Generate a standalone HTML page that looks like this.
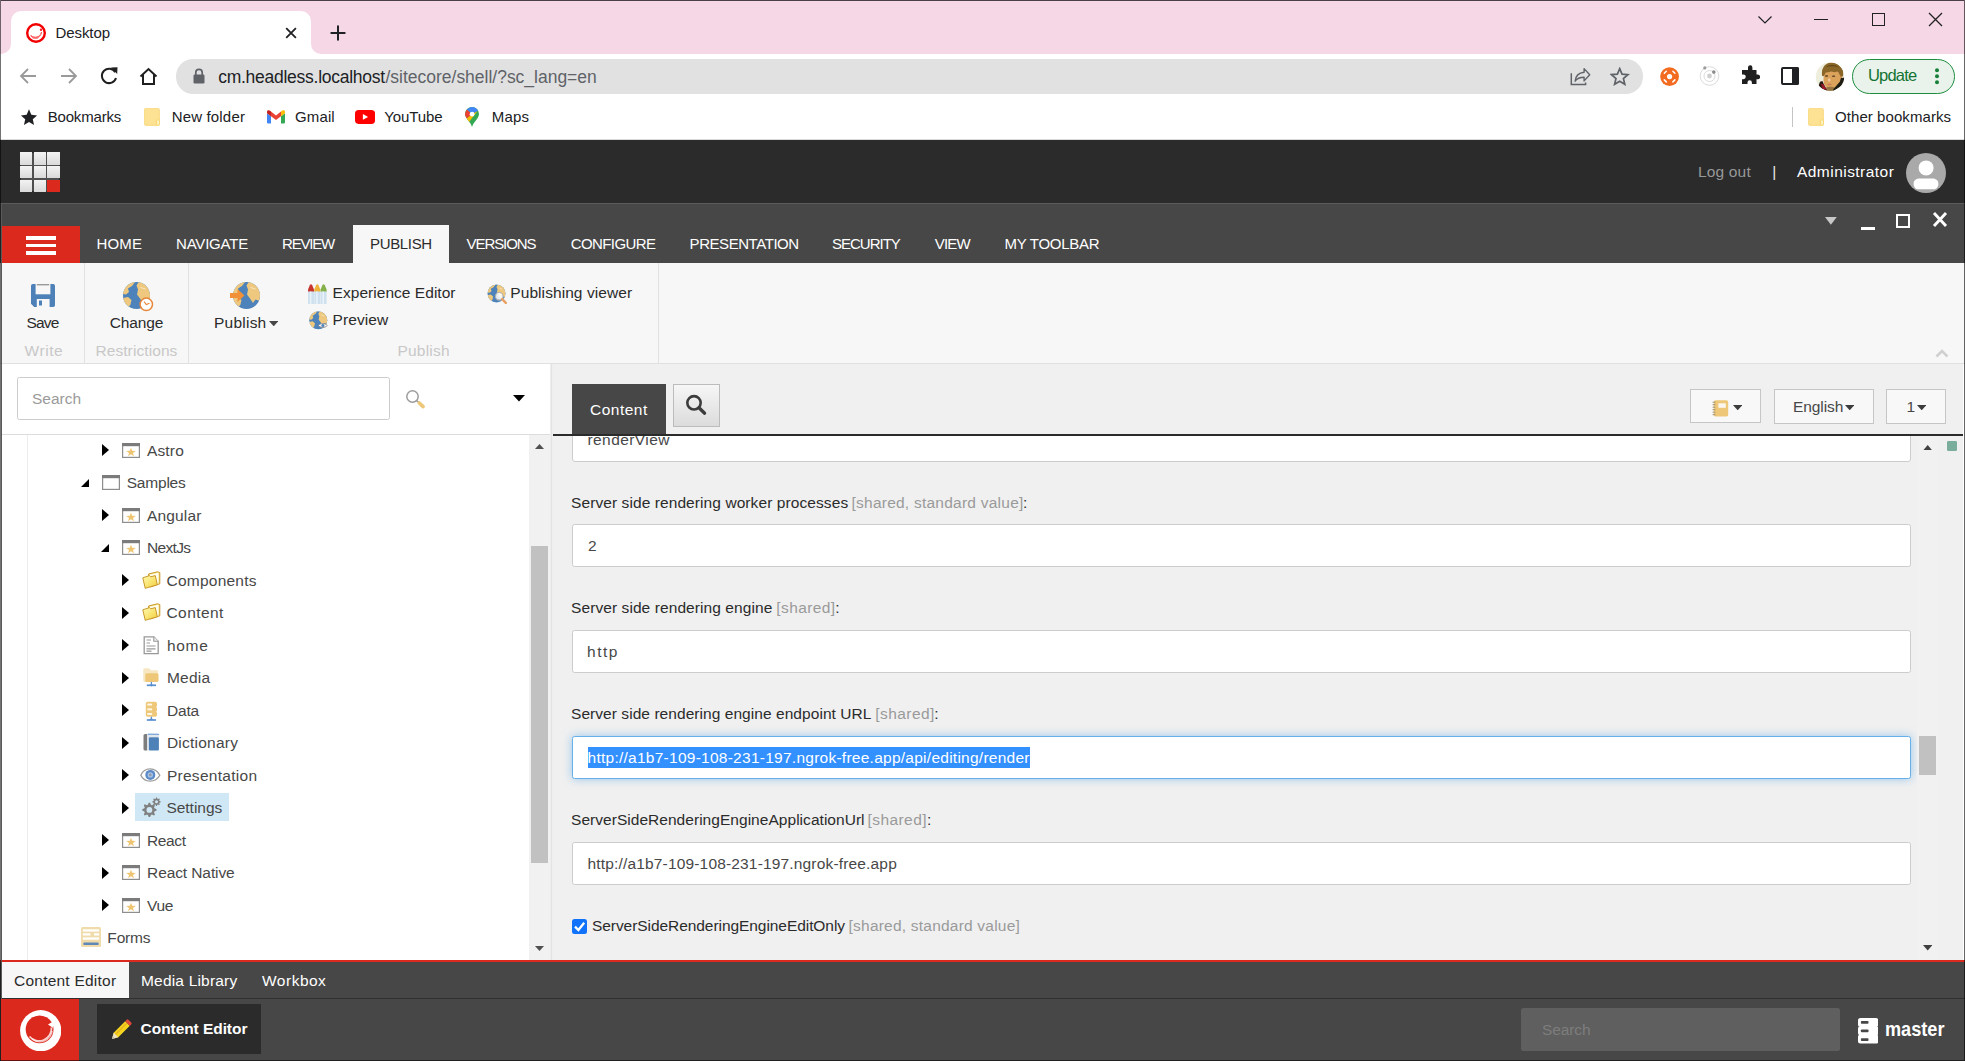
<!DOCTYPE html>
<html lang="en"><head><meta charset="utf-8"><title>Desktop</title>
<style>
html,body{margin:0;padding:0;}
body{width:1965px;height:1061px;overflow:hidden;position:relative;background:#fff;font-family:"Liberation Sans", Arial, sans-serif;}
body>div,body>span,body>svg,body>a,body>label,body>input,body>button{position:absolute;box-sizing:border-box;display:block;}
.t{white-space:pre;}
</style></head>
<body>

<!-- browser frame -->
<div style="left:0px;top:0px;width:1965px;height:54px;background:#f5d7e6;"></div>
<div style="left:1px;top:0px;width:1963px;height:1px;background:rgba(0,0,0,.7);"></div>
<div style="left:11px;top:11px;width:300px;height:43px;background:#fff;border-radius:10px 10px 0 0;"></div>
<svg style="left:1px;top:44px;" width="10" height="10" viewBox="0 0 10 10"><path d="M10 0 V10 H0 A10 10 0 0 0 10 0Z" fill="#fff"/></svg>
<svg style="left:311px;top:44px;" width="10" height="10" viewBox="0 0 10 10"><path d="M0 0 V10 H10 A10 10 0 0 1 0 0Z" fill="#fff"/></svg>
<svg style="left:25px;top:21.8px;" width="22" height="22" viewBox="0 0 22 22"><circle cx="11" cy="11" r="8.800" fill="#fff" stroke="#f20000" stroke-width="2.400"/><path d="M5.800 13.500c1.500 4 9 5 10.800-3.500c-1.500 5.500-7 6.500-10.800 3.500Z" fill="#f66" stroke="#f55" stroke-width="1"/><path d="M7.500 15.800c3.500 1.800 7.500 0 8.500-4.500" fill="none" stroke="#f99" stroke-width=".8"/><circle cx="16" cy="7.800" r="1.200" fill="#f22"/></svg>
<span class="t" style="left:55.5px;top:24px;font-size:15px;line-height:17px;color:#202124;letter-spacing:-0.083px;">Desktop</span>
<svg style="left:285px;top:26.6px;" width="12" height="12" viewBox="0 0 12 12"><path d="M1.200 1.200L10.900 10.900M10.900 1.200L1.200 10.900" stroke="#202124" stroke-width="1.800" fill="none"/></svg>
<svg style="left:330.4px;top:24.5px;" width="16" height="16" viewBox="0 0 16 16"><path d="M8 1.300V14.700M1.300 8H14.700" stroke="#202124" stroke-width="2" stroke-linecap="round" fill="none"/></svg>
<svg style="left:1757px;top:14px;" width="16" height="12" viewBox="0 0 16 12"><path d="M1.5 2.5L8 9L14.5 2.5" stroke="#222" stroke-width="1.2" fill="none"/></svg>
<div style="left:1814px;top:19px;width:14px;height:1px;background:#222;"></div>
<div style="left:1872px;top:13px;width:13px;height:13px;border:1.3px solid #222;"></div>
<svg style="left:1928px;top:12px;" width="15" height="15" viewBox="0 0 15 15"><path d="M1 1L14 14M14 1L1 14" stroke="#222" stroke-width="1.3" fill="none"/></svg>

<!-- browser toolbar -->
<div style="left:0px;top:54px;width:1965px;height:46px;background:#fff;"></div>
<svg style="left:18px;top:66px;" width="21" height="20" viewBox="0 0 21 20"><path d="M18 10H3.5M10 3L3 10L10 17" stroke="#9a9a9a" stroke-width="1.8" fill="none"/></svg>
<svg style="left:58px;top:66px;" width="21" height="20" viewBox="0 0 21 20"><path d="M3 10H17.5M11 3L18 10L11 17" stroke="#9a9a9a" stroke-width="1.8" fill="none"/></svg>
<svg style="left:98px;top:64.5px;" width="22" height="22" viewBox="0 0 22 22"><path d="M17.3 7.2A7.2 7.2 0 1 0 18 13" stroke="#1f1f1f" stroke-width="2" fill="none"/><path d="M13 2.5L19.5 2.2L19.2 9Z" fill="#1f1f1f"/></svg>
<svg style="left:138px;top:65.5px;" width="21" height="21" viewBox="0 0 21 21"><path d="M2.5 10.5L10.5 3L18.5 10.5M5 8.8V18H16V8.8" stroke="#1f1f1f" stroke-width="2" fill="none" stroke-linejoin="miter"/></svg>
<div style="left:176px;top:59px;width:1467px;height:34.5px;background:#e1e1e1;border-radius:17.2px;"></div>
<svg style="left:193px;top:68px;" width="12" height="16" viewBox="0 0 12 16"><rect x="0.5" y="6.5" width="11" height="9" rx="1.3" fill="#5f6368"/><path d="M2.8 7V4.6a3.2 3.2 0 0 1 6.4 0V7" stroke="#5f6368" stroke-width="1.7" fill="none"/></svg>
<span class="t" style="left:218.2px;top:67px;font-size:17.5px;line-height:20px;color:#202124;letter-spacing:-0.26px;">cm.headless.localhost</span>
<span class="t" style="left:385.5px;top:67px;font-size:17.5px;line-height:20px;color:#5f6368;letter-spacing:-0.012px;">/sitecore/shell/?sc_lang=en</span>
<svg style="left:1570px;top:67px;" width="21" height="19" viewBox="0 0 21 19"><path d="M1.300 6.200V17.400H15.600V15.600" stroke="#5f6368" stroke-width="1.500" fill="none"/><path d="M14.100 1.600L19.700 7.700L14.100 13.900V10.200C9.500 10.200 6.800 11.500 5.100 14.200C5.600 9 9 5.800 14.100 5.300Z" stroke="#5f6368" stroke-width="1.400" fill="none" stroke-linejoin="round"/></svg>
<svg style="left:1610px;top:67px;" width="20" height="19" viewBox="0 0 20 19"><path d="M9.700 1.700L12 7.100L17.900 7.600L13.400 11.500L14.800 17.300L9.700 14.200L4.600 17.300L6 11.500L1.500 7.600L7.400 7.100Z" stroke="#5f6368" stroke-width="1.700" fill="none" stroke-linejoin="miter"/></svg>
<svg style="left:1660px;top:66.8px;" width="19.2" height="19.2" viewBox="0 0 19.2 19.2"><circle cx="9.600" cy="9.600" r="9.400" fill="#f26b21"/><circle cx="9.600" cy="9.600" r="2.600" fill="#fff"/><path d="M4.300 6.300L6.300 4.300M12.900 4.300L14.900 6.300M14.900 12.900L12.900 14.900M6.300 14.900L4.300 12.900" stroke="#fff" stroke-width="1.500" stroke-linecap="round"/></svg>
<svg style="left:1699px;top:65.4px;" width="22" height="22" viewBox="0 0 22 22"><circle cx="10.500" cy="11" r="9.300" fill="none" stroke="#dcdcdc" stroke-width="1"/><circle cx="10.500" cy="11" r="5.500" fill="none" stroke="#dcdcdc" stroke-width="1"/><circle cx="10.500" cy="11" r="2.400" fill="#cfcfcf"/><circle cx="5.800" cy="2.900" r="1.600" fill="#9a9a9a"/><circle cx="14.800" cy="7.100" r="1.800" fill="#8a8a8a"/></svg>
<svg style="left:1739.3px;top:65.3px;" width="21" height="21" viewBox="0 0 21 21"><path d="M9 2.5a2.2 2.2 0 0 1 4.4 0V5h4.1v4.4h1.2a2.4 2.4 0 0 1 0 4.8h-1.2V19h-4.6v-1.6a2.2 2.2 0 0 0-4.4 0V19H3v-4.8h1.4a2.4 2.4 0 0 0 0-4.8H3V5h6Z" fill="#1f1f1f"/></svg>
<div style="left:1781px;top:67.2px;width:17.6px;height:17.8px;background:#fff;border:2.5px solid #202124;border-radius:2px;"></div>
<div style="left:1792.3px;top:67.2px;width:6.3px;height:17.8px;background:#202124;border-radius:0 2px 2px 0;"></div>
<svg style="left:1815px;top:62px;" width="30" height="30" viewBox="0 0 30 30"><defs><clipPath id="av"><circle cx="15" cy="14.800" r="14.200"/></clipPath></defs><g clip-path="url(#av)"><rect width="30" height="30" fill="#eeeedd"/><ellipse cx="17.600" cy="10" rx="10.300" ry="9" fill="#8a6628"/><ellipse cx="17.100" cy="17.700" rx="8.700" ry="10.500" fill="#dba25c"/><path d="M25.800 12.500L27.300 13.500L26.800 17L25.300 17.500Z" fill="#c98a48"/><path d="M7 13.800C6 4 12 0.300 17 0.500C24 0.500 29.500 5.500 28 14.500L25.800 14C26 11 25 9.500 23 9L20 10.200L16 9.500L12 10.500L9.300 10C8.600 11 8.600 12.500 8.800 14.200Z" fill="#8a6628"/><path d="M11 5C13 2.500 20 2 24 5.500C21 4 14 4 11 5Z" fill="#5e4316"/><ellipse cx="11.500" cy="14" rx="1.700" ry=".650" fill="#4a3318"/><ellipse cx="18.600" cy="14.200" rx="1.700" ry=".650" fill="#4a3318"/><ellipse cx="14.200" cy="18" rx="1.300" ry="1.800" fill="#f0c9a0"/><ellipse cx="14.600" cy="22.500" rx="2.200" ry=".700" fill="#c9785a"/><ellipse cx="15.300" cy="27" rx="5" ry="2.300" fill="#8a6a38" opacity=".85"/><path d="M25.800 16.200L29.500 15.500V22L17.700 29.500L18.500 26.900L24.800 19.700Z" fill="#1f1c12"/><path d="M5 19.700L7.400 18.900L8.600 21.700L12.200 28.500L6.600 28L3.500 24Z" fill="#2a1a14"/><path d="M5.800 21.700L8.600 22.500L11.800 27.800L7.800 27Z" fill="#a01828"/></g></svg>
<div style="left:1852px;top:58.8px;width:103px;height:34.8px;background:#e9f3ec;border:1.3px solid #1e8e3e;border-radius:17.4px;"></div>
<span class="t" style="left:1868px;top:66px;font-size:16.5px;line-height:18px;color:#137333;letter-spacing:-0.8px;">Update</span>
<svg style="left:1934px;top:66px;" width="6" height="21" viewBox="0 0 6 21"><circle cx="3" cy="4.200" r="2" fill="#188038"/><circle cx="3" cy="10.200" r="2" fill="#188038"/><circle cx="3" cy="16.200" r="2" fill="#188038"/></svg>

<!-- bookmarks bar -->
<div style="left:0px;top:100px;width:1965px;height:40px;background:#fff;"></div>
<div style="left:0px;top:139px;width:1965px;height:1px;background:#dadada;"></div>
<svg style="left:20px;top:108px;" width="18" height="18" viewBox="0 0 20 20"><path d="M10 1.5L12.6 7.6L19 8.2L14.2 12.5L15.6 18.8L10 15.5L4.4 18.8L5.8 12.5L1 8.2L7.4 7.6Z" fill="#202124"/></svg>
<span class="t" style="left:47.7px;top:108px;font-size:15px;line-height:17px;color:#202124;letter-spacing:-0.175px;">Bookmarks</span>
<svg style="left:144px;top:108px;" width="16" height="18" viewBox="0 0 16 18"><rect x="0.400" y="0.400" width="15" height="17" rx="1.600" fill="#fde293" stroke="#f8d775" stroke-width=".8"/><rect x="12.600" y="11.800" width="3" height="5.400" rx="1.100" fill="#fff3c4" stroke="#f6cf5e" stroke-width=".8"/></svg>
<span class="t" style="left:171.7px;top:108px;font-size:15px;line-height:17px;color:#202124;letter-spacing:0.167px;">New folder</span>
<svg style="left:266.9px;top:110.2px;" width="18" height="13.4" viewBox="0 0 18 13.4"><path d="M0 3.200L4 6.200V13.400H1.200A1.200 1.200 0 0 1 0 12.200Z" fill="#4285f4"/><path d="M18 3.200L14 6.200V13.400H16.800A1.200 1.200 0 0 0 18 12.200Z" fill="#34a853"/><path d="M4 6.200V1.600L9 5.400L14 1.600V6.200L9 10Z" fill="#ea4335"/><path d="M0 3.200V1.800A1.700 1.700 0 0 1 2.700 0.500L4 1.600V6.200Z" fill="#c5221f"/><path d="M18 3.200V1.800A1.700 1.700 0 0 0 15.300 0.500L14 1.600V6.200Z" fill="#fbbc04"/></svg>
<span class="t" style="left:295px;top:108px;font-size:15px;line-height:17px;color:#202124;letter-spacing:0.125px;">Gmail</span>
<svg style="left:355px;top:110px;" width="20.1" height="13.9" viewBox="0 0 20.1 13.9"><rect x="0" y="0" width="20.100" height="13.900" rx="3.600" fill="#f00"/><path d="M7.900 4.100L13.100 6.950L7.900 9.800Z" fill="#fff"/></svg>
<span class="t" style="left:384.3px;top:108px;font-size:15px;line-height:17px;color:#202124;letter-spacing:-0.1px;">YouTube</span>
<svg style="left:465px;top:106.9px;" width="14" height="19.9" viewBox="0 0 14 19.9"><defs><clipPath id="mp"><path d="M7 0A7 7 0 0 1 14 7C14 11.500 9 14 7 19.900C5 14 0 11.500 0 7A7 7 0 0 1 7 0Z"/></clipPath></defs><g clip-path="url(#mp)"><rect width="14" height="20" fill="#34a853"/><path d="M7 7L1.500 11.500L4 15L12.500 4Z" fill="#fbbc04"/><path d="M7 7L1.800 2.300L-1 7L1.500 11.500Z" fill="#ea4335"/><path d="M7 7L1.800 2.300L7 -1L14 1.500L12.500 4Z" fill="#4285f4"/><circle cx="7.100" cy="7.200" r="2.400" fill="#fff"/></g></svg>
<span class="t" style="left:491.8px;top:108px;font-size:15px;line-height:17px;color:#202124;letter-spacing:0.2px;">Maps</span>
<div style="left:1792px;top:107px;width:1px;height:20px;background:#c4c4c4;"></div>
<svg style="left:1808px;top:108px;" width="16" height="18" viewBox="0 0 16 18"><rect x="0.400" y="0.400" width="15" height="17" rx="1.600" fill="#fde293" stroke="#f8d775" stroke-width=".8"/><rect x="12.600" y="11.800" width="3" height="5.400" rx="1.100" fill="#fff3c4" stroke="#f6cf5e" stroke-width=".8"/></svg>
<span class="t" style="left:1835px;top:108px;font-size:15px;line-height:17px;color:#202124;letter-spacing:0.071px;">Other bookmarks</span>

<!-- sitecore header -->
<div style="left:0px;top:140px;width:1965px;height:63px;background:#2b2b2b;"></div>
<div style="left:20.5px;top:152.7px;width:38.8px;height:38.8px;background:#4e4e4e;"></div>
<div style="left:20.0px;top:152.2px;width:12.4px;height:12.4px;background:linear-gradient(#f3f3f3,#d9d9d9);"></div>
<div style="left:33.7px;top:152.2px;width:12.4px;height:12.4px;background:linear-gradient(#f3f3f3,#d9d9d9);"></div>
<div style="left:47.4px;top:152.2px;width:12.4px;height:12.4px;background:linear-gradient(#f3f3f3,#d9d9d9);"></div>
<div style="left:20.0px;top:165.89999999999998px;width:12.4px;height:12.4px;background:linear-gradient(#f3f3f3,#d9d9d9);"></div>
<div style="left:33.7px;top:165.89999999999998px;width:12.4px;height:12.4px;background:linear-gradient(#f3f3f3,#d9d9d9);"></div>
<div style="left:47.4px;top:165.89999999999998px;width:12.4px;height:12.4px;background:linear-gradient(#f3f3f3,#d9d9d9);"></div>
<div style="left:20.0px;top:179.6px;width:12.4px;height:12.4px;background:linear-gradient(#f3f3f3,#d9d9d9);"></div>
<div style="left:33.7px;top:179.6px;width:12.4px;height:12.4px;background:linear-gradient(#f3f3f3,#d9d9d9);"></div>
<div style="left:47.4px;top:179.6px;width:12.4px;height:12.4px;background:#dc291e;"></div>
<span class="t" style="left:1698px;top:163px;font-size:15.5px;line-height:17px;color:#989898;letter-spacing:0.167px;">Log out</span>
<span class="t" style="left:1772.3px;top:163px;font-size:15.5px;line-height:17px;color:#e8e8e8;">|</span>
<span class="t" style="left:1797px;top:163px;font-size:15.5px;line-height:17px;color:#ffffff;letter-spacing:0.458px;">Administrator</span>
<svg style="left:1906px;top:152.6px;" width="40" height="40" viewBox="0 0 40 40"><defs><clipPath id="uc"><circle cx="20" cy="20" r="20"/></clipPath></defs><circle cx="20" cy="20" r="20" fill="#a9a9a9"/><g clip-path="url(#uc)"><circle cx="20.100" cy="14.900" r="7.500" fill="#fff"/><path d="M7.600 31c0-4 3-5.400 6-5.400h12.800c3 0 6 1.400 6 5.400c0 3-2 5.300-5 5.300h-14.800c-3 0-5-2.300-5-5.300Z" fill="#fff"/></g></svg>

<!-- ribbon bar -->
<div style="left:0px;top:203px;width:1965px;height:59.5px;background:#474747;"></div>
<div style="left:0px;top:203px;width:1965px;height:1px;background:#5c5c5c;"></div>
<svg style="left:1825px;top:216.8px;" width="11.8" height="7.8" viewBox="0 0 11.8 7.8"><path d="M0 0H11.800L5.900 7.800Z" fill="#c8c8c8"/></svg>
<div style="left:1860.7px;top:227.2px;width:14px;height:2.8px;background:#fff;"></div>
<div style="left:1896.2px;top:214px;width:14.3px;height:13.7px;border:2.5px solid #fff;"></div>
<svg style="left:1931.5px;top:211px;" width="16" height="17" viewBox="0 0 16 17"><path d="M2 2L14 15M14 2L2 15" stroke="#fff" stroke-width="2.900" fill="none"/></svg>
<div style="left:2px;top:226px;width:78px;height:36.5px;background:#dc291e;"></div>
<div style="left:26px;top:236px;width:30.3px;height:3.75px;background:#fff;"></div>
<div style="left:26px;top:243.5px;width:30.3px;height:3.75px;background:#fff;"></div>
<div style="left:26px;top:251px;width:30.3px;height:3.75px;background:#fff;"></div>
<div style="left:352.7px;top:225px;width:96px;height:38px;background:#f7f7f7;"></div>
<span class="t" style="left:96.4px;top:235px;font-size:15px;line-height:17px;color:#fff;letter-spacing:0.2px;">HOME</span>
<span class="t" style="left:176px;top:235px;font-size:15px;line-height:17px;color:#fff;letter-spacing:-0.2px;">NAVIGATE</span>
<span class="t" style="left:282px;top:235px;font-size:15px;line-height:17px;color:#fff;letter-spacing:-1.2px;">REVIEW</span>
<span class="t" style="left:370px;top:235px;font-size:15px;line-height:17px;color:#2b2b2b;letter-spacing:-0.333px;">PUBLISH</span>
<span class="t" style="left:466.6px;top:235px;font-size:15px;line-height:17px;color:#fff;letter-spacing:-1.086px;">VERSIONS</span>
<span class="t" style="left:570.7px;top:235px;font-size:15px;line-height:17px;color:#fff;letter-spacing:-0.588px;">CONFIGURE</span>
<span class="t" style="left:689.6px;top:235px;font-size:15px;line-height:17px;color:#fff;letter-spacing:-0.445px;">PRESENTATION</span>
<span class="t" style="left:832px;top:235px;font-size:15px;line-height:17px;color:#fff;letter-spacing:-1.0px;">SECURITY</span>
<span class="t" style="left:934.8px;top:235px;font-size:15px;line-height:17px;color:#fff;letter-spacing:-0.8px;">VIEW</span>
<span class="t" style="left:1004.6px;top:235px;font-size:15px;line-height:17px;color:#fff;letter-spacing:-0.289px;">MY TOOLBAR</span>

<!-- ribbon content -->
<div style="left:0px;top:262.5px;width:1965px;height:100.5px;background:#f7f7f7;"></div>
<div style="left:0px;top:362.5px;width:1965px;height:1.5px;background:#e0e0e0;"></div>
<div style="left:84px;top:262.5px;width:1px;height:100px;background:#e1e1e1;"></div>
<div style="left:188px;top:262.5px;width:1px;height:100px;background:#e1e1e1;"></div>
<div style="left:658px;top:262.5px;width:1px;height:100px;background:#e1e1e1;"></div>
<span class="t" style="left:26.5px;top:314px;font-size:15.5px;line-height:17px;color:#2b2b2b;letter-spacing:-0.833px;">Save</span>
<span class="t" style="left:24.5px;top:342px;font-size:15.5px;line-height:17px;color:#c8c8c8;letter-spacing:0.575px;">Write</span>
<span class="t" style="left:109.8px;top:314px;font-size:15.5px;line-height:17px;color:#2b2b2b;letter-spacing:-0.16px;">Change</span>
<span class="t" style="left:95.4px;top:342px;font-size:15.5px;line-height:17px;color:#c8c8c8;letter-spacing:0.091px;">Restrictions</span>
<span class="t" style="left:214px;top:314px;font-size:15.5px;line-height:17px;color:#2b2b2b;letter-spacing:0.233px;">Publish</span>
<svg style="left:268.7px;top:321.2px;" width="9.4" height="5.3" viewBox="0 0 9.4 5.3"><path d="M0 0H9.400L4.700 5.300Z" fill="#474747"/></svg>
<span class="t" style="left:332.6px;top:284px;font-size:15.5px;line-height:17px;color:#2b2b2b;letter-spacing:0.037px;">Experience Editor</span>
<span class="t" style="left:332.6px;top:311px;font-size:15.5px;line-height:17px;color:#2b2b2b;letter-spacing:0.067px;">Preview</span>
<span class="t" style="left:510.3px;top:284px;font-size:15.5px;line-height:17px;color:#2b2b2b;letter-spacing:0.075px;">Publishing viewer</span>
<span class="t" style="left:397.4px;top:342px;font-size:15.5px;line-height:17px;color:#c8c8c8;letter-spacing:0.233px;">Publish</span>
<svg style="left:1935px;top:348px;" width="14" height="10" viewBox="0 0 14 10"><path d="M1.500 8.500L7 3L12.500 8.500" stroke="#d0d0d0" stroke-width="2.600" fill="none"/></svg>

<!-- ribbon icons -->
<svg style="left:31px;top:283.5px;" width="24" height="23" viewBox="0 0 24 23"><path d="M0 1.800A1.800 1.800 0 0 1 1.800 0H22.200A1.800 1.800 0 0 1 24 1.800V21.200A1.800 1.800 0 0 1 22.200 23H3.200L0 19.800Z" fill="#4d81b8"/><rect x="4.600" y="0" width="14.800" height="10.300" fill="#f7f7f7"/><rect x="5.800" y="0" width="12.400" height="1.400" fill="#9a9a9a"/><rect x="5.800" y="15" width="12.800" height="8" fill="#f7f7f7"/><rect x="8" y="16.500" width="3" height="5" fill="#4d81b8"/></svg>
<svg style="left:122px;top:281px;" width="32" height="31" viewBox="0 0 32 31"><defs><clipPath id="g1"><circle cx="14.5" cy="14.5" r="13.5"/></clipPath></defs><circle cx="14.5" cy="14.5" r="13.5" fill="#4d82ba"/><g clip-path="url(#g1)" fill="#eec87e"><path d="M0.50 10.50 C2.50 3.50 7.50 0.50 13.50 0.50 L10.00 5.00 L6.00 7.50 L7.00 11.00 L4.00 13.50 L0.50 13.00Z"/><path d="M17.00 0.50 C23.50 0.50 28.50 6.50 28.50 14.50 L28.00 20.00 L23.50 18.50 L21.00 22.00 L18.00 17.50 L15.00 13.50 L16.00 8.50 L14.50 4.50Z"/><path d="M0.50 17.00 L6.00 16.00 L9.50 19.00 L8.50 23.50 L5.50 27.50 L0.50 23.50Z"/></g><path d="M18.50 6.50 L23.50 8.00" stroke="#fff" stroke-opacity=".6" stroke-width="0.90"/><circle cx="24.300" cy="23.300" r="6.200" fill="#fff" stroke="#e8873a" stroke-width="1.500"/><path d="M22 20.500L24.300 23.500L27.500 22.300" stroke="#e8873a" stroke-width="1.200" fill="none"/></svg>
<svg style="left:229px;top:281px;" width="32" height="31" viewBox="0 0 32 31"><defs><clipPath id="g2"><circle cx="17.5" cy="14.5" r="13.5"/></clipPath></defs><circle cx="17.5" cy="14.5" r="13.5" fill="#4d82ba"/><g clip-path="url(#g2)" fill="#eec87e"><path d="M3.50 10.50 C5.50 3.50 10.50 0.50 16.50 0.50 L13.00 5.00 L9.00 7.50 L10.00 11.00 L7.00 13.50 L3.50 13.00Z"/><path d="M20.00 0.50 C26.50 0.50 31.50 6.50 31.50 14.50 L31.00 20.00 L26.50 18.50 L24.00 22.00 L21.00 17.50 L18.00 13.50 L19.00 8.50 L17.50 4.50Z"/><path d="M3.50 17.00 L9.00 16.00 L12.50 19.00 L11.50 23.50 L8.50 27.50 L3.50 23.50Z"/></g><path d="M21.50 6.50 L26.50 8.00" stroke="#fff" stroke-opacity=".6" stroke-width="0.90"/><path d="M1 12H8.500V8L15.500 14.500L8.500 21V17H1Z" fill="#f0913a"/></svg>
<svg style="left:308px;top:283.7px;" width="19" height="20" viewBox="0 0 19 20"><path d="M0 8V5.500L1.800 1.200Q3 -0.600 4.200 1.200L6 5.500V8Z" fill="#c7372f"/><path d="M6.300 8V5.500L8.100 1.200Q9.300 -0.600 10.500 1.200L12.300 5.500V8Z" fill="#eeb43a"/><path d="M12.600 8V5.500L14.400 1.200Q15.600 -0.600 16.800 1.200L18.600 5.500V8Z" fill="#86b04a"/><rect x="0" y="7.500" width="6" height="12.500" fill="#cfe1ee"/><rect x="6.300" y="7.500" width="6" height="12.500" fill="#cfe1ee"/><rect x="12.600" y="7.500" width="6" height="12.500" fill="#cfe1ee"/><rect x="1.800" y="7.500" width="1.600" height="12.500" fill="#e8f2f9"/><rect x="8.100" y="7.500" width="1.600" height="12.500" fill="#e8f2f9"/><rect x="14.400" y="7.500" width="1.600" height="12.500" fill="#e8f2f9"/></svg>
<svg style="left:308.5px;top:310.5px;" width="20" height="19" viewBox="0 0 20 19"><defs><clipPath id="g3"><circle cx="9.3" cy="9.3" r="9"/></clipPath></defs><circle cx="9.3" cy="9.3" r="9" fill="#4d82ba"/><g clip-path="url(#g3)" fill="#eec87e"><path d="M-0.03 6.63 C1.30 1.97 4.63 -0.03 8.63 -0.03 L6.30 2.97 L3.63 4.63 L4.30 6.97 L2.30 8.63 L-0.03 8.30Z"/><path d="M10.97 -0.03 C15.30 -0.03 18.63 3.97 18.63 9.30 L18.30 12.97 L15.30 11.97 L13.63 14.30 L11.63 11.30 L9.63 8.63 L10.30 5.30 L9.30 2.63Z"/><path d="M-0.03 10.97 L3.63 10.30 L5.97 12.30 L5.30 15.30 L3.30 17.97 L-0.03 15.30Z"/></g><path d="M11.97 3.97 L15.30 4.97" stroke="#fff" stroke-opacity=".6" stroke-width="0.60"/><path d="M9.500 14.500c2-2.600 6.500-2.600 8.800 0c-2.300 2.600-6.800 2.600-8.800 0Z" fill="#f4f4f4" stroke="#8a8a8a" stroke-width=".9"/><circle cx="13.900" cy="14.500" r="1.500" fill="#4d81b8"/></svg>
<svg style="left:486.5px;top:284px;" width="21" height="20" viewBox="0 0 21 20"><defs><clipPath id="g4"><circle cx="9.5" cy="9.5" r="9"/></clipPath></defs><circle cx="9.5" cy="9.5" r="9" fill="#4d82ba"/><g clip-path="url(#g4)" fill="#eec87e"><path d="M0.17 6.83 C1.50 2.17 4.83 0.17 8.83 0.17 L6.50 3.17 L3.83 4.83 L4.50 7.17 L2.50 8.83 L0.17 8.50Z"/><path d="M11.17 0.17 C15.50 0.17 18.83 4.17 18.83 9.50 L18.50 13.17 L15.50 12.17 L13.83 14.50 L11.83 11.50 L9.83 8.83 L10.50 5.50 L9.50 2.83Z"/><path d="M0.17 11.17 L3.83 10.50 L6.17 12.50 L5.50 15.50 L3.50 18.17 L0.17 15.50Z"/></g><path d="M12.17 4.17 L15.50 5.17" stroke="#fff" stroke-opacity=".6" stroke-width="0.60"/><circle cx="12.300" cy="12.300" r="3.800" fill="#fff" fill-opacity=".85" stroke="#b0b0b0" stroke-width="1.200"/><path d="M15.200 15.200L18.800 18.800" stroke="#e9a060" stroke-width="2.400" stroke-linecap="round"/></svg>

<!-- content tree panel -->
<div style="left:0px;top:364px;width:550px;height:596px;background:#fff;"></div>
<div style="left:17px;top:377px;width:373px;height:43px;background:#fff;border:1px solid #ccc;border-radius:2.500px;"></div>
<span class="t" style="left:32px;top:390px;font-size:15.5px;line-height:17px;color:#9a9a9a;">Search</span>
<svg style="left:405px;top:389px;" width="22" height="22" viewBox="0 0 22 22"><circle cx="7.500" cy="7.500" r="5.700" fill="#fff" stroke="#9c9c9c" stroke-width="1.500"/><path d="M11.600 11.600L13.600 13.500" stroke="#9c9c9c" stroke-width="1.600"/><path d="M14.300 14L18.100 17.600" stroke="#eec878" stroke-width="3.600" stroke-linecap="round"/></svg>
<svg style="left:513.4px;top:395.2px;" width="12" height="6.6" viewBox="0 0 12 6.6"><path d="M0 0H12L6 6.600Z" fill="#000"/></svg>
<div style="left:1px;top:434px;width:549px;height:1px;background:#dcdcdc;"></div>
<div style="left:27px;top:435px;width:1px;height:525px;background:#ececec;"></div>
<div style="left:529.3px;top:435px;width:20.7px;height:525px;background:#f1f1f1;"></div>
<div style="left:531.3px;top:546px;width:16.5px;height:317px;background:#c1c1c1;"></div>
<svg style="left:535px;top:444.3px;" width="9" height="5" viewBox="0 0 9 5"><path d="M0 5H9L4.500 0Z" fill="#505050"/></svg>
<svg style="left:535px;top:946px;" width="9" height="5" viewBox="0 0 9 5"><path d="M0 0H9L4.500 5Z" fill="#505050"/></svg>
<div style="left:550px;top:364px;width:3px;height:596px;background:#eeeeee;"></div>
<div style="left:550.8px;top:364px;width:1.2px;height:596px;background:#e3e3e3;"></div>
<svg style="left:102.4px;top:444.3px;" width="7" height="12" viewBox="0 0 7 12"><path d="M0 0L7 6L0 12Z" fill="#000"/></svg>
<svg style="left:122.1px;top:442.6px;" width="18" height="15" viewBox="0 0 18 15"><rect x="0.6" y="0.6" width="16.8" height="13.8" fill="#fff" stroke="#8e8e8e" stroke-width="1.2"/><rect x="0" y="0" width="18" height="3.2" fill="#7b7b7b"/><path d="M9.00 4.71 L10.23 7.84 L13.85 7.95 L11.00 10.00 L12.00 13.20 L9.00 11.33 L6.00 13.20 L7.00 10.00 L4.15 7.95 L7.77 7.84Z" fill="#eec673"/></svg>
<span class="t" style="left:146.95px;top:442px;font-size:15.5px;line-height:17px;color:#474747;letter-spacing:0.163px;">Astro</span>
<svg style="left:81.0px;top:479.0px;" width="8" height="8" viewBox="0 0 8 8"><path d="M8 0V8H0Z" fill="#000"/></svg>
<svg style="left:102.1px;top:475.1px;" width="18" height="15" viewBox="0 0 18 15"><rect x="0.6" y="0.6" width="16.8" height="13.8" fill="#fff" stroke="#8e8e8e" stroke-width="1.2"/><rect x="0" y="0" width="18" height="3.2" fill="#7b7b7b"/></svg>
<span class="t" style="left:126.7px;top:474px;font-size:15.5px;line-height:17px;color:#474747;letter-spacing:-0.2px;">Samples</span>
<svg style="left:102.4px;top:509.3px;" width="7" height="12" viewBox="0 0 7 12"><path d="M0 0L7 6L0 12Z" fill="#000"/></svg>
<svg style="left:122.1px;top:507.6px;" width="18" height="15" viewBox="0 0 18 15"><rect x="0.6" y="0.6" width="16.8" height="13.8" fill="#fff" stroke="#8e8e8e" stroke-width="1.2"/><rect x="0" y="0" width="18" height="3.2" fill="#7b7b7b"/><path d="M9.00 4.71 L10.23 7.84 L13.85 7.95 L11.00 10.00 L12.00 13.20 L9.00 11.33 L6.00 13.20 L7.00 10.00 L4.15 7.95 L7.77 7.84Z" fill="#eec673"/></svg>
<span class="t" style="left:146.95px;top:507px;font-size:15.5px;line-height:17px;color:#474747;letter-spacing:0.175px;">Angular</span>
<svg style="left:101.0px;top:544.0px;" width="8" height="8" viewBox="0 0 8 8"><path d="M8 0V8H0Z" fill="#000"/></svg>
<svg style="left:122.1px;top:540.1px;" width="18" height="15" viewBox="0 0 18 15"><rect x="0.6" y="0.6" width="16.8" height="13.8" fill="#fff" stroke="#8e8e8e" stroke-width="1.2"/><rect x="0" y="0" width="18" height="3.2" fill="#7b7b7b"/><path d="M9.00 4.71 L10.23 7.84 L13.85 7.95 L11.00 10.00 L12.00 13.20 L9.00 11.33 L6.00 13.20 L7.00 10.00 L4.15 7.95 L7.77 7.84Z" fill="#eec673"/></svg>
<span class="t" style="left:147.05px;top:539px;font-size:15.5px;line-height:17px;color:#474747;letter-spacing:-0.67px;">NextJs</span>
<svg style="left:122.4px;top:574.3px;" width="7" height="12" viewBox="0 0 7 12"><path d="M0 0L7 6L0 12Z" fill="#000"/></svg>
<svg style="left:142.1px;top:570.5px;" width="19" height="19" viewBox="0 0 19 19"><defs><linearGradient id="fg" x1="0" y1="0" x2="1" y2="1"><stop offset="0" stop-color="#fffbb0"/><stop offset="1" stop-color="#f2cf3a"/></linearGradient></defs><path d="M6.500 3L15.500 0.800L17.800 1.500V12.800L8.500 16Z" fill="#f6e27a" stroke="#c9982c" stroke-width="1"/><path d="M7.500 3.800L16.500 1.800V12.300L8.500 15Z" fill="#fffef0"/><path d="M0.800 6.800L3.200 17.300L15.300 13.800L13.300 4.600L8.800 5.800L7.500 4.600Z" fill="url(#fg)" stroke="#c9982c" stroke-width="1" stroke-linejoin="round"/></svg>
<span class="t" style="left:166.5px;top:572px;font-size:15.5px;line-height:17px;color:#474747;letter-spacing:0.233px;">Components</span>
<svg style="left:122.4px;top:606.8px;" width="7" height="12" viewBox="0 0 7 12"><path d="M0 0L7 6L0 12Z" fill="#000"/></svg>
<svg style="left:142.1px;top:603.0px;" width="19" height="19" viewBox="0 0 19 19"><defs><linearGradient id="fg" x1="0" y1="0" x2="1" y2="1"><stop offset="0" stop-color="#fffbb0"/><stop offset="1" stop-color="#f2cf3a"/></linearGradient></defs><path d="M6.500 3L15.500 0.800L17.800 1.500V12.800L8.500 16Z" fill="#f6e27a" stroke="#c9982c" stroke-width="1"/><path d="M7.500 3.800L16.500 1.800V12.300L8.500 15Z" fill="#fffef0"/><path d="M0.800 6.800L3.200 17.300L15.300 13.800L13.300 4.600L8.800 5.800L7.500 4.600Z" fill="url(#fg)" stroke="#c9982c" stroke-width="1" stroke-linejoin="round"/></svg>
<span class="t" style="left:166.5px;top:604px;font-size:15.5px;line-height:17px;color:#474747;letter-spacing:0.417px;">Content</span>
<svg style="left:122.4px;top:639.3px;" width="7" height="12" viewBox="0 0 7 12"><path d="M0 0L7 6L0 12Z" fill="#000"/></svg>
<svg style="left:143.1px;top:636.0px;" width="17" height="19" viewBox="0 0 17 19"><path d="M1.200 0.800H10.800L15.200 5.200V17.600H1.200Z" fill="#fff" stroke="#999" stroke-width="1.300"/><path d="M10.800 0.800V5.200H15.200" fill="#eee" stroke="#999" stroke-width="1.100"/><path d="M3.500 4H8M3.500 10H12.500M3.500 12.800H12.500M3.500 15.200H8.500M3.500 7H7" stroke="#999" stroke-width="1.200"/></svg>
<span class="t" style="left:166.9px;top:637px;font-size:15.5px;line-height:17px;color:#474747;letter-spacing:0.7px;">home</span>
<svg style="left:122.4px;top:671.8px;" width="7" height="12" viewBox="0 0 7 12"><path d="M0 0L7 6L0 12Z" fill="#000"/></svg>
<svg style="left:143.1px;top:668.0px;" width="17" height="19" viewBox="0 0 17 19"><path d="M0.300 1.500A1.200 1.200 0 0 1 1.500 0.300H6L8 2.300H13.800A1.200 1.200 0 0 1 15 3.500V12.700A1.200 1.200 0 0 1 13.800 13.900H1.500A1.200 1.200 0 0 1 0.300 12.700Z" fill="#f6e6c2"/><rect x="2.300" y="5.200" width="13.200" height="8.700" rx="1.500" fill="#eec878"/><path d="M8.400 13.900V16.500" stroke="#5a8fcf" stroke-width="1.300"/><path d="M3.800 17.300H13" stroke="#5a8fcf" stroke-width="1.700"/><path d="M8.400 15.500L10.200 17.300L8.400 18.600L6.600 17.300Z" fill="#5a8fcf"/></svg>
<span class="t" style="left:166.9px;top:669px;font-size:15.5px;line-height:17px;color:#474747;letter-spacing:0.275px;">Media</span>
<svg style="left:122.4px;top:704.3px;" width="7" height="12" viewBox="0 0 7 12"><path d="M0 0L7 6L0 12Z" fill="#000"/></svg>
<svg style="left:145.1px;top:700.5px;" width="14" height="20" viewBox="0 0 14 20"><rect x="0.800" y="0.700" width="11.200" height="15" rx="1.800" fill="#eec878"/><rect x="2.300" y="2.600" width="4.800" height="1.900" fill="#fff8e8"/><rect x="2.300" y="7.400" width="4.800" height="1.900" fill="#fff8e8"/><rect x="2.300" y="12" width="4.800" height="1.900" fill="#fff8e8"/><path d="M12 5.300L10.800 6L12 6.700ZM12 10L10.800 10.700L12 11.400Z" fill="#fff"/><path d="M6.400 15.700V18.300" stroke="#5a8fcf" stroke-width="1.300"/><path d="M1.800 19H11" stroke="#5a8fcf" stroke-width="1.700"/><path d="M6.400 16.500L8.200 19H4.600Z" fill="#5a8fcf"/></svg>
<span class="t" style="left:166.9px;top:702px;font-size:15.5px;line-height:17px;color:#474747;letter-spacing:-0.133px;">Data</span>
<svg style="left:122.4px;top:736.8px;" width="7" height="12" viewBox="0 0 7 12"><path d="M0 0L7 6L0 12Z" fill="#000"/></svg>
<svg style="left:143.1px;top:733.2px;" width="17" height="19" viewBox="0 0 17 19"><path d="M2 1A1.500 1.500 0 0 0 0.500 2.500V16A1.500 1.500 0 0 0 2 17.500H4.300V1Z" fill="#7d7d7d"/><path d="M4.300 1H15A1 1 0 0 1 16 2V4H6.500V17.500H4.300Z" fill="#dfe6ee"/><path d="M4.800 1.200H15A.8.800 0 0 1 15.800 2" stroke="#5a8fcf" stroke-width="1" fill="none"/><rect x="5.900" y="4.300" width="10" height="13.200" rx="1" fill="#4d81b8"/></svg>
<span class="t" style="left:166.9px;top:734px;font-size:15.5px;line-height:17px;color:#474747;letter-spacing:0.233px;">Dictionary</span>
<svg style="left:122.4px;top:769.3px;" width="7" height="12" viewBox="0 0 7 12"><path d="M0 0L7 6L0 12Z" fill="#000"/></svg>
<svg style="left:140.29999999999998px;top:766.6px;" width="21" height="16" viewBox="0 0 21 16"><path d="M0.800 8.200C4.500 -0.300 15.500 -0.300 19.800 8.200C15.500 16 4.500 16 0.800 8.200Z" fill="#fff" stroke="#9a9a9a" stroke-width="1.300"/><circle cx="10.300" cy="7.900" r="5" fill="#5a8ac8"/><circle cx="10.300" cy="7.900" r="2.700" fill="#a9c3e6"/><circle cx="10.300" cy="7.900" r="1.300" fill="#8e98a8"/></svg>
<span class="t" style="left:166.9px;top:767px;font-size:15.5px;line-height:17px;color:#474747;letter-spacing:0.282px;">Presentation</span>
<div style="left:135.2px;top:793.2px;width:93.8px;height:27.6px;background:#d0e8f5;"></div>
<svg style="left:122.4px;top:801.8px;" width="7" height="12" viewBox="0 0 7 12"><path d="M0 0L7 6L0 12Z" fill="#000"/></svg>
<svg style="left:140.1px;top:796.5px;" width="22" height="22" viewBox="0 0 22 22"><path d="M16.57 12.19 L16.57 13.61 L14.47 14.44 L14.07 15.40 L14.97 17.47 L13.97 18.47 L11.90 17.57 L10.94 17.97 L10.11 20.07 L8.69 20.07 L7.86 17.97 L6.90 17.57 L4.83 18.47 L3.83 17.47 L4.73 15.40 L4.33 14.44 L2.23 13.61 L2.23 12.19 L4.33 11.36 L4.73 10.40 L3.83 8.33 L4.83 7.33 L6.90 8.23 L7.86 7.83 L8.69 5.73 L10.11 5.73 L10.94 7.83 L11.90 8.23 L13.97 7.33 L14.97 8.33 L14.07 10.40 L14.47 11.36Z M12.3 12.9A2.9 2.9 0 1 0 6.5 12.9A2.9 2.9 0 1 0 12.3 12.9Z" fill="#808080" fill-rule="evenodd"/><path d="M20.78 4.38 L20.78 5.22 L19.47 5.70 L19.23 6.26 L19.82 7.53 L19.23 8.12 L17.96 7.53 L17.40 7.77 L16.92 9.08 L16.08 9.08 L15.60 7.77 L15.04 7.53 L13.77 8.12 L13.18 7.53 L13.77 6.26 L13.53 5.70 L12.22 5.22 L12.22 4.38 L13.53 3.90 L13.77 3.34 L13.18 2.07 L13.77 1.48 L15.04 2.07 L15.60 1.83 L16.08 0.52 L16.92 0.52 L17.40 1.83 L17.96 2.07 L19.23 1.48 L19.82 2.07 L19.23 3.34 L19.47 3.90Z M18.0 4.8A1.5 1.5 0 1 0 15.0 4.8A1.5 1.5 0 1 0 18.0 4.8Z" fill="#808080" fill-rule="evenodd"/></svg>
<span class="t" style="left:166.4px;top:799px;font-size:15.5px;line-height:17px;color:#474747;letter-spacing:-0.014px;">Settings</span>
<svg style="left:102.4px;top:834.3px;" width="7" height="12" viewBox="0 0 7 12"><path d="M0 0L7 6L0 12Z" fill="#000"/></svg>
<svg style="left:122.1px;top:832.6px;" width="18" height="15" viewBox="0 0 18 15"><rect x="0.6" y="0.6" width="16.8" height="13.8" fill="#fff" stroke="#8e8e8e" stroke-width="1.2"/><rect x="0" y="0" width="18" height="3.2" fill="#7b7b7b"/><path d="M9.00 4.71 L10.23 7.84 L13.85 7.95 L11.00 10.00 L12.00 13.20 L9.00 11.33 L6.00 13.20 L7.00 10.00 L4.15 7.95 L7.77 7.84Z" fill="#eec673"/></svg>
<span class="t" style="left:147.05px;top:832px;font-size:15.5px;line-height:17px;color:#474747;letter-spacing:-0.388px;">React</span>
<svg style="left:102.4px;top:866.8px;" width="7" height="12" viewBox="0 0 7 12"><path d="M0 0L7 6L0 12Z" fill="#000"/></svg>
<svg style="left:122.1px;top:865.1px;" width="18" height="15" viewBox="0 0 18 15"><rect x="0.6" y="0.6" width="16.8" height="13.8" fill="#fff" stroke="#8e8e8e" stroke-width="1.2"/><rect x="0" y="0" width="18" height="3.2" fill="#7b7b7b"/><path d="M9.00 4.71 L10.23 7.84 L13.85 7.95 L11.00 10.00 L12.00 13.20 L9.00 11.33 L6.00 13.20 L7.00 10.00 L4.15 7.95 L7.77 7.84Z" fill="#eec673"/></svg>
<span class="t" style="left:147.05px;top:864px;font-size:15.5px;line-height:17px;color:#474747;letter-spacing:-0.095px;">React Native</span>
<svg style="left:102.4px;top:899.3px;" width="7" height="12" viewBox="0 0 7 12"><path d="M0 0L7 6L0 12Z" fill="#000"/></svg>
<svg style="left:122.1px;top:897.6px;" width="18" height="15" viewBox="0 0 18 15"><rect x="0.6" y="0.6" width="16.8" height="13.8" fill="#fff" stroke="#8e8e8e" stroke-width="1.2"/><rect x="0" y="0" width="18" height="3.2" fill="#7b7b7b"/><path d="M9.00 4.71 L10.23 7.84 L13.85 7.95 L11.00 10.00 L12.00 13.20 L9.00 11.33 L6.00 13.20 L7.00 10.00 L4.15 7.95 L7.77 7.84Z" fill="#eec673"/></svg>
<span class="t" style="left:146.95px;top:897px;font-size:15.5px;line-height:17px;color:#474747;letter-spacing:-0.225px;">Vue</span>
<svg style="left:81px;top:927.0px;" width="20" height="20" viewBox="0 0 20 20"><rect x="0" y="0" width="20" height="20" rx="1.500" fill="#f0dcaa"/><rect x="1.800" y="2.300" width="16.400" height="2.300" fill="#fff"/><rect x="1.800" y="6.300" width="7.700" height="2.200" fill="#fff"/><rect x="13" y="6.300" width="5.200" height="2.200" fill="#fff"/><rect x="1.800" y="10.400" width="16.400" height="2.300" fill="#fff"/><rect x="2.300" y="15.400" width="15.400" height="2.700" rx="1.200" fill="#5f87b8"/></svg>
<span class="t" style="left:107.35px;top:929px;font-size:15.5px;line-height:17px;color:#474747;letter-spacing:-0.163px;">Forms</span>

<!-- editor panel -->
<div style="left:553px;top:364px;width:1410px;height:596px;background:#f0f0f0;"></div>
<div style="left:572px;top:384px;width:94px;height:50.5px;background:#474747;"></div>
<span class="t" style="left:590px;top:401px;font-size:15.5px;line-height:17px;color:#fff;letter-spacing:0.5px;">Content</span>
<div style="left:673px;top:384.2px;width:46.8px;height:42.6px;background:linear-gradient(#f6f6f6,#dcdcdc);border:1px solid #bcbcbc;"></div>
<svg style="left:684px;top:393px;" width="26" height="26" viewBox="0 0 26 26"><circle cx="10" cy="9.800" r="6.700" fill="none" stroke="#3c3c3c" stroke-width="2.600"/><path d="M15 14.800L20.600 20.200" stroke="#3c3c3c" stroke-width="3.300" stroke-linecap="round"/></svg>
<div style="left:1690px;top:389px;width:71px;height:34px;background:#f8f8f8;border:1px solid #c6c6c6;"></div>
<div style="left:1774px;top:389px;width:100px;height:35px;background:#f8f8f8;border:1px solid #c6c6c6;"></div>
<div style="left:1886px;top:389px;width:60px;height:35px;background:#f8f8f8;border:1px solid #c6c6c6;"></div>
<svg style="left:1711.5px;top:400px;" width="17" height="17" viewBox="0 0 17 17"><rect x="1.800" y="0.300" width="14.400" height="16.300" rx="1.800" fill="#eec878"/><rect x="6.400" y="3.300" width="7.400" height="4.500" fill="#fbf7ee"/><path d="M0.600 2.200H3.400M0.600 4.700H3.400M0.600 7.200H3.400M0.600 9.700H3.400M0.600 12.200H3.400M0.600 14.700H3.400" stroke="#9a9078" stroke-width="1"/></svg>
<svg style="left:1732.6px;top:404.8px;" width="9.4" height="5.3" viewBox="0 0 9.4 5.3"><path d="M0 0H9.400L4.700 5.300Z" fill="#3c3c3c"/></svg>
<span class="t" style="left:1793px;top:398px;font-size:15.5px;line-height:17px;color:#474747;letter-spacing:-0.083px;">English</span>
<svg style="left:1844.9px;top:404.8px;" width="9.4" height="5.3" viewBox="0 0 9.4 5.3"><path d="M0 0H9.400L4.700 5.300Z" fill="#3c3c3c"/></svg>
<span class="t" style="left:1906.5px;top:398px;font-size:15.5px;line-height:17px;color:#474747;">1</span>
<svg style="left:1916.7px;top:404.8px;" width="9.4" height="5.3" viewBox="0 0 9.4 5.3"><path d="M0 0H9.400L4.700 5.300Z" fill="#3c3c3c"/></svg>
<div style="left:572px;top:436px;width:1338.5px;height:26px;overflow:hidden;"><div style="position:absolute;box-sizing:border-box;left:0;top:-17px;width:1338.500px;height:43px;background:#fff;border:1px solid #ccc;border-radius:3px;"></div><span class="t" style="position:absolute;left:15.500px;top:-5px;font-size:15.5px;line-height:17px;color:#474747;letter-spacing:.42px;">renderView</span></div>
<div style="left:553px;top:434px;width:1410px;height:2px;background:#2b2b2b;"></div>
<span class="t" style="left:571px;top:494px;font-size:15.5px;line-height:17px;color:#2b2b2b;letter-spacing:0.086px;">Server side rendering worker processes</span>
<span class="t" style="left:851.5px;top:494px;font-size:15.5px;line-height:17px;color:#9a9a9a;letter-spacing:0.239px;">[shared, standard value]</span>
<span class="t" style="left:1023px;top:494px;font-size:15.5px;line-height:17px;color:#2b2b2b;">:</span>
<div style="left:572px;top:524px;width:1338.5px;height:43px;background:#fff;border:1px solid #ccc;border-radius:2.500px;"></div>
<span class="t" style="left:587.9px;top:537px;font-size:15.5px;line-height:17px;color:#474747;">2</span>
<span class="t" style="left:571px;top:599px;font-size:15.5px;line-height:17px;color:#2b2b2b;letter-spacing:0.085px;">Server side rendering engine</span>
<span class="t" style="left:776.3px;top:599px;font-size:15.5px;line-height:17px;color:#9a9a9a;letter-spacing:0.386px;">[shared]</span>
<span class="t" style="left:835.3px;top:599px;font-size:15.5px;line-height:17px;color:#2b2b2b;">:</span>
<div style="left:572px;top:630px;width:1338.5px;height:43px;background:#fff;border:1px solid #ccc;border-radius:2.500px;"></div>
<span class="t" style="left:587px;top:643px;font-size:15.5px;line-height:17px;color:#474747;letter-spacing:1.533px;">http</span>
<span class="t" style="left:571px;top:705px;font-size:15.5px;line-height:17px;color:#2b2b2b;letter-spacing:0.057px;">Server side rendering engine endpoint URL</span>
<span class="t" style="left:875.3px;top:705px;font-size:15.5px;line-height:17px;color:#9a9a9a;letter-spacing:0.429px;">[shared]</span>
<span class="t" style="left:934.3px;top:705px;font-size:15.5px;line-height:17px;color:#2b2b2b;">:</span>
<div style="left:572px;top:736px;width:1338.5px;height:43px;background:#fff;border:1px solid #66afe9;border-radius:2.500px;box-shadow:0 0 10px rgba(102,175,233,.65);"></div>
<div style="left:588px;top:747px;width:442.3px;height:20.6px;background:#3390ff;"></div>
<span class="t" style="left:587.5px;top:749px;font-size:15.5px;line-height:17px;color:#fff;letter-spacing:0.258px;">http://a1b7-109-108-231-197.ngrok-free.app/api/editing/render</span>
<span class="t" style="left:571px;top:811px;font-size:15.5px;line-height:17px;color:#2b2b2b;letter-spacing:0.039px;">ServerSideRenderingEngineApplicationUrl</span>
<span class="t" style="left:867.5px;top:811px;font-size:15.5px;line-height:17px;color:#9a9a9a;letter-spacing:0.429px;">[shared]</span>
<span class="t" style="left:927px;top:811px;font-size:15.5px;line-height:17px;color:#2b2b2b;">:</span>
<div style="left:572px;top:842px;width:1338.5px;height:43px;background:#fff;border:1px solid #ccc;border-radius:2.500px;"></div>
<span class="t" style="left:587.5px;top:855px;font-size:15.5px;line-height:17px;color:#474747;letter-spacing:0.166px;">http://a1b7-109-108-231-197.ngrok-free.app</span>
<div style="left:572px;top:919px;width:15.2px;height:15px;background:#1173fb;border-radius:2.500px;"></div>
<svg style="left:572px;top:919px;" width="15" height="15" viewBox="0 0 15 15"><path d="M3 7.700L6.400 11L12.200 3.800" stroke="#fff" stroke-width="2.300" fill="none"/></svg>
<span class="t" style="left:592px;top:917px;font-size:15.5px;line-height:17px;color:#2b2b2b;letter-spacing:-0.062px;">ServerSideRenderingEngineEditOnly</span>
<span class="t" style="left:848.6px;top:917px;font-size:15.5px;line-height:17px;color:#9a9a9a;letter-spacing:0.213px;">[shared, standard value]</span>
<div style="left:1916.6px;top:436px;width:21.4px;height:523.6px;background:#f1f1f1;"></div>
<svg style="left:1922.8px;top:444.7px;" width="9.4" height="5.6" viewBox="0 0 9.4 5.6"><path d="M0 5.600H9.400L4.700 0Z" fill="#404040"/></svg>
<svg style="left:1922.8px;top:945.2px;" width="9.4" height="5.6" viewBox="0 0 9.4 5.6"><path d="M0 0H9.400L4.700 5.600Z" fill="#404040"/></svg>
<div style="left:1947px;top:441.2px;width:10.2px;height:10px;background:#7aad9b;border-radius:1.2px;"></div>
<div style="left:1918.9px;top:736px;width:17.2px;height:38.9px;background:#c1c1c1;"></div>

<!-- bottom application tabs -->
<div style="left:0px;top:959.6px;width:1965px;height:2.4px;background:#dc291e;"></div>
<div style="left:0px;top:962px;width:1965px;height:36px;background:#474747;"></div>
<div style="left:2px;top:962px;width:127px;height:36px;background:#f7f7f7;"></div>
<span class="t" style="left:14px;top:972px;font-size:15.5px;line-height:17px;color:#2b2b2b;letter-spacing:0.231px;">Content Editor</span>
<span class="t" style="left:141px;top:972px;font-size:15.5px;line-height:17px;color:#fff;letter-spacing:0.192px;">Media Library</span>
<span class="t" style="left:262px;top:972px;font-size:15.5px;line-height:17px;color:#fff;letter-spacing:0.5px;">Workbox</span>
<div style="left:0px;top:997.6px;width:1965px;height:1.3px;background:#2f2f2f;"></div>
<div style="left:0px;top:999px;width:1965px;height:62px;background:#474747;"></div>
<div style="left:1px;top:999px;width:78px;height:62px;background:#dc291e;"></div>
<svg style="left:19.8px;top:1009.5px;" width="41.4" height="41.4" viewBox="0 0 41.4 41.4"><circle cx="20.700" cy="20.700" r="20.600" fill="#fff"/><circle cx="19.600" cy="19.400" r="13.900" fill="#dc291e"/><path d="M9.500 26.500A12.500 12.500 0 0 0 31.500 17.500" fill="none" stroke="#fff" stroke-width="1.800" opacity=".8"/><path d="M12 29A12.500 12.500 0 0 0 32.300 21" fill="none" stroke="#fff" stroke-width="1.100" opacity=".65"/><path d="M28 14.500L33 11.500L33.200 18Z" fill="#fff"/></svg>
<div style="left:97px;top:1004px;width:163.8px;height:50px;background:#2b2b2b;"></div>
<svg style="left:110.5px;top:1019.2px;" width="21" height="21" viewBox="0 0 21 21"><path d="M1 20L2.700 13.700L14.200 2.200L18.800 6.800L7.300 18.300Z" fill="#f5d31f"/><path d="M4.500 15.500L16 4" stroke="#e9b520" stroke-width="1.600"/><path d="M14.200 2.200L15.600 0.800a1.300 1.300 0 0 1 1.800 0L20.200 3.600a1.300 1.300 0 0 1 0 1.800L18.800 6.800Z" fill="#e0483a"/><path d="M1 20L2.700 13.700L7.300 18.300Z" fill="#efe0c0"/><path d="M1 20L1.700 17.400L3.600 19.300Z" fill="#aaa"/></svg>
<span class="t" style="left:140.6px;top:1020px;font-size:15.5px;line-height:17px;color:#fff;font-weight:700;letter-spacing:-0.062px;">Content Editor</span>
<div style="left:1520.8px;top:1008px;width:319.3px;height:42.7px;background:#5f5f5f;border-radius:2.5px;"></div>
<span class="t" style="left:1542px;top:1021px;font-size:15.5px;line-height:17px;color:#7d7d7d;letter-spacing:-0.1px;">Search</span>
<svg style="left:1857.8px;top:1018px;" width="20.4" height="25.6" viewBox="0 0 20.4 25.6"><rect x="0" y="0" width="20.400" height="9" rx="2.500" fill="#fff"/><rect x="0" y="8.300" width="20.400" height="9" rx="2.500" fill="#fff"/><rect x="0" y="16.600" width="20.400" height="9" rx="2.500" fill="#fff"/><rect x="2" y="7" width="15" height="12" fill="#fff"/><rect x="2.900" y="3" width="7.600" height="2.700" rx=".800" fill="#474747"/><rect x="2.900" y="11.500" width="7.600" height="2.700" rx=".800" fill="#474747"/><rect x="2.900" y="20.300" width="7.600" height="2.700" rx=".800" fill="#474747"/></svg>
<span class="t" style="left:1885.04px;top:1017px;font-size:21px;line-height:23px;color:#fff;font-weight:700;transform:scaleX(0.8632);transform-origin:0 0;">master</span>

<!-- window border -->
<div style="left:1px;top:203px;width:1px;height:796px;background:#5a5a5a;"></div>
<div style="left:0px;top:0px;width:1px;height:1061px;background:rgba(0,0,0,.55);"></div>
<div style="left:1963.8px;top:0px;width:1.2px;height:1061px;background:rgba(0,0,0,.6);"></div>
<div style="left:1px;top:1060px;width:1963px;height:1px;background:rgba(0,0,0,.55);"></div>
</body></html>
